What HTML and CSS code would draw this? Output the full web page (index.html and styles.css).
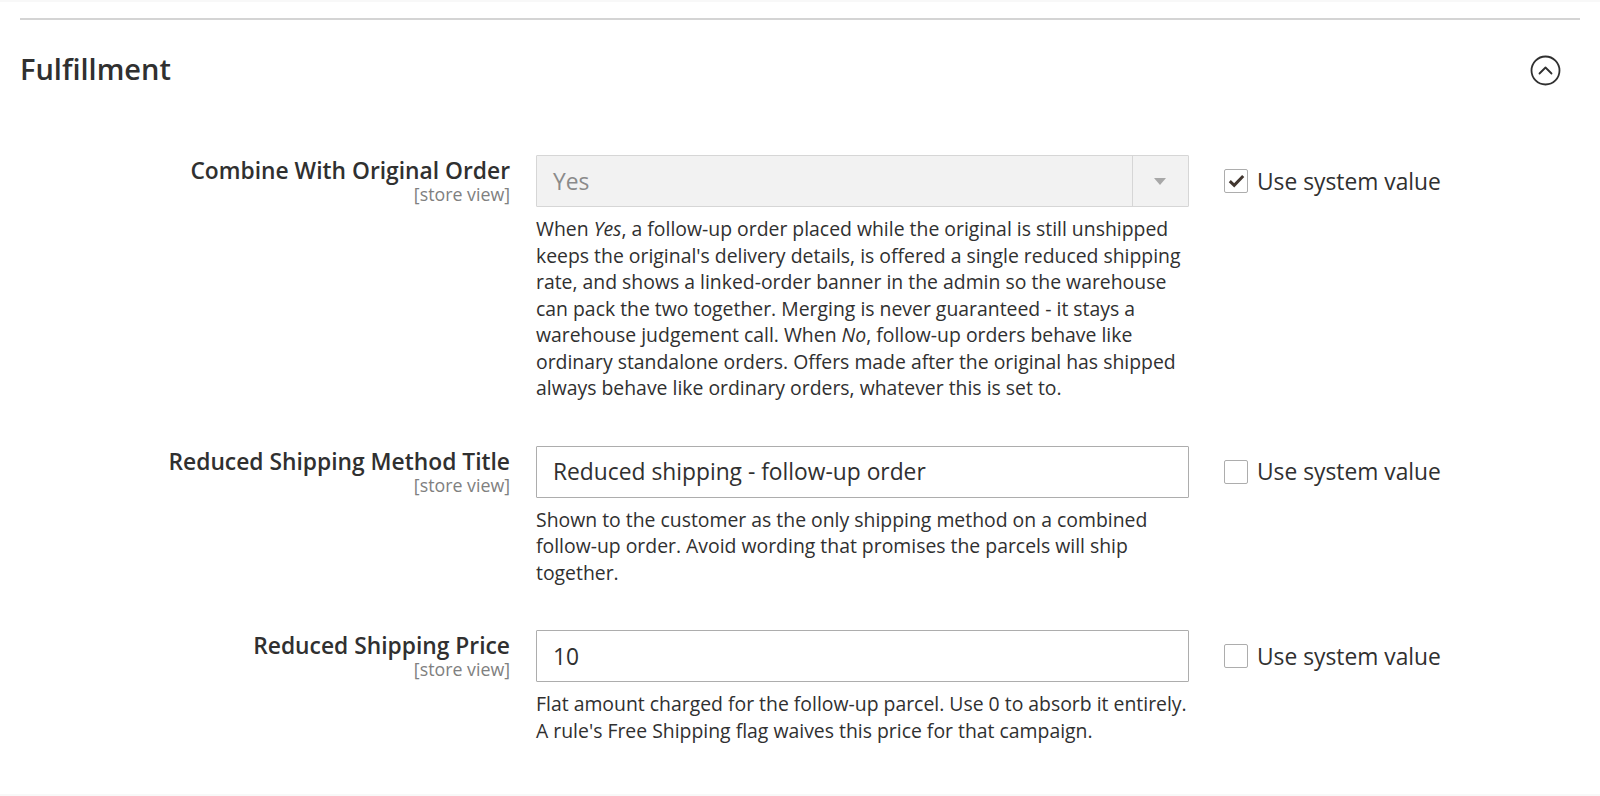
FILE: index.html
```html
<!DOCTYPE html>
<html>
<head>
    <title>Configuration - Fulfillment</title>
    <link rel="stylesheet" href="styles.css">
</head>
<body>
    <div class="page">
        <div class="section">
            <div class="section-head">
                <h2 class="section-title">Fulfillment</h2>
                <button type="button" class="collapse-button" aria-label="Collapse">
                    <svg width="31" height="31" viewBox="0 0 31 31">
                        <circle cx="15.5" cy="15.5" r="14" fill="none" stroke="#303030" stroke-width="1.8"/>
                        <path d="M9.5 18.5 L15.5 12.5 L21.5 18.5" fill="none" stroke="#303030" stroke-width="1.8" stroke-linecap="round" stroke-linejoin="round"/>
                    </svg>
                </button>
            </div>

            <!-- Combine with original order -->
            <div class="field-row">
                <div class="field-label">
                    <label for="combineOrder">Combine With Original Order</label>
                    <span class="scope">[store view]</span>
                </div>
                <div class="field-control">
                    <div class="select-box">
                        <span class="select-value">Yes</span>
                        <span class="select-arrow"></span>
                    </div>
                    <p class="note">When <em>Yes</em>, a follow-up order placed while the original is still unshipped keeps the original's delivery details, is offered a single reduced shipping rate, and shows a linked-order banner in the admin so the warehouse can pack the two together. Merging is never guaranteed - it stays a warehouse judgement call. When <em>No</em>, follow-up orders behave like ordinary standalone orders. Offers made after the original has shipped always behave like ordinary orders, whatever this is set to.</p>
                </div>
                <label class="use-default">
                    <span class="checkbox checked">
                        <svg width="17" height="14" viewBox="0 0 17 14"><path d="M1.8 7.2 L6.2 11.4 L15.2 2" fill="none" stroke="#41362f" stroke-width="3"/></svg>
                    </span>
                    Use system value
                </label>
            </div>

            <!-- Reduced shipping method title -->
            <div class="field-row">
                <div class="field-label">
                    <label for="methodTitle">Reduced Shipping Method Title</label>
                    <span class="scope">[store view]</span>
                </div>
                <div class="field-control">
                    <input type="text" id="methodTitle" class="text-input" value="Reduced shipping - follow-up order">
                    <p class="note">Shown to the customer as the only shipping method on a combined follow-up order. Avoid wording that promises the parcels will ship together.</p>
                </div>
                <label class="use-default">
                    <span class="checkbox"></span>
                    Use system value
                </label>
            </div>

            <!-- Reduced shipping price -->
            <div class="field-row">
                <div class="field-label">
                    <label for="shippingPrice">Reduced Shipping Price</label>
                    <span class="scope">[store view]</span>
                </div>
                <div class="field-control">
                    <input type="text" id="shippingPrice" class="text-input" value="10">
                    <p class="note">Flat amount charged for the follow-up parcel. Use 0 to absorb it entirely. A rule's Free Shipping flag waives this price for that campaign.</p>
                </div>
                <label class="use-default">
                    <span class="checkbox"></span>
                    Use system value
                </label>
            </div>
        </div>
    </div>
</body>
</html>
```

FILE: styles.css
```css
html,
body {
    margin: 0;
    padding: 0;
}

body {
    background-color: #ffffff;
    font-family: "Open Sans", "Liberation Sans", sans-serif;
    color: #303030;
    border-top: 2px solid #f8f8f8;
    border-bottom: 2px solid #f8f8f8;
    min-height: 792px;
}

.page {
    padding: 0 20px;
}

.section {
    margin-top: 16px;
    border-top: 2px solid #d4d4d4;
}

.section-head {
    display: flex;
    justify-content: space-between;
    align-items: center;
    height: 100px;
    padding-right: 19px;
}

.section-title {
    margin: 0 0 4px;
    font-size: 29px;
    font-weight: 600;
    color: #303030;
}

.collapse-button {
    background: none;
    border: none;
    padding: 0;
    cursor: pointer;
    display: flex;
}

.field-row {
    display: grid;
    grid-template-columns: 490px 653px auto;
    column-gap: 26px;
    align-items: start;
    margin-top: 35px;
}

.field-row + .field-row {
    margin-top: 44px;
}

.field-label {
    display: flex;
    flex-direction: column;
    align-items: flex-end;
    text-align: right;
    padding-top: 3px;
}

.field-label label {
    font-size: 22.8px;
    font-weight: 600;
    line-height: 26px;
}

.scope {
    font-size: 17.8px;
    color: #808080;
    line-height: 20px;
}

.select-box {
    display: flex;
    align-items: center;
    height: 52px;
    box-sizing: border-box;
    border: 1px solid #d6d6d6;
    border-radius: 1px;
    background-color: #f2f2f2;
}

.select-value {
    flex: 1;
    padding-left: 16px;
    font-size: 22.8px;
    color: #8a8a8a;
}

.select-arrow {
    width: 55px;
    align-self: stretch;
    border-left: 1px solid #d6d6d6;
    position: relative;
}

.select-arrow::after {
    content: "";
    position: absolute;
    left: 21px;
    top: 22px;
    border-left: 6px solid transparent;
    border-right: 6px solid transparent;
    border-top: 7px solid #a8a8a8;
}

.text-input {
    display: block;
    width: 100%;
    height: 52px;
    box-sizing: border-box;
    border: 1px solid #adadad;
    border-radius: 1px;
    padding: 0 16px;
    font-family: "Open Sans", "Liberation Sans", sans-serif;
    font-size: 22.8px;
    color: #303030;
    background-color: #ffffff;
}

.note {
    margin: 9px 0 0;
    font-size: 19.4px;
    line-height: 26.5px;
    color: #303030;
}

.use-default {
    display: flex;
    align-items: center;
    gap: 9px;
    margin-left: 9px;
    height: 52px;
    font-size: 22.8px;
    color: #303030;
    white-space: nowrap;
}

.checkbox {
    width: 24px;
    height: 24px;
    box-sizing: border-box;
    border: 1px solid #adadad;
    border-radius: 2px;
    background-color: #ffffff;
    display: flex;
    align-items: center;
    justify-content: center;
}
```
